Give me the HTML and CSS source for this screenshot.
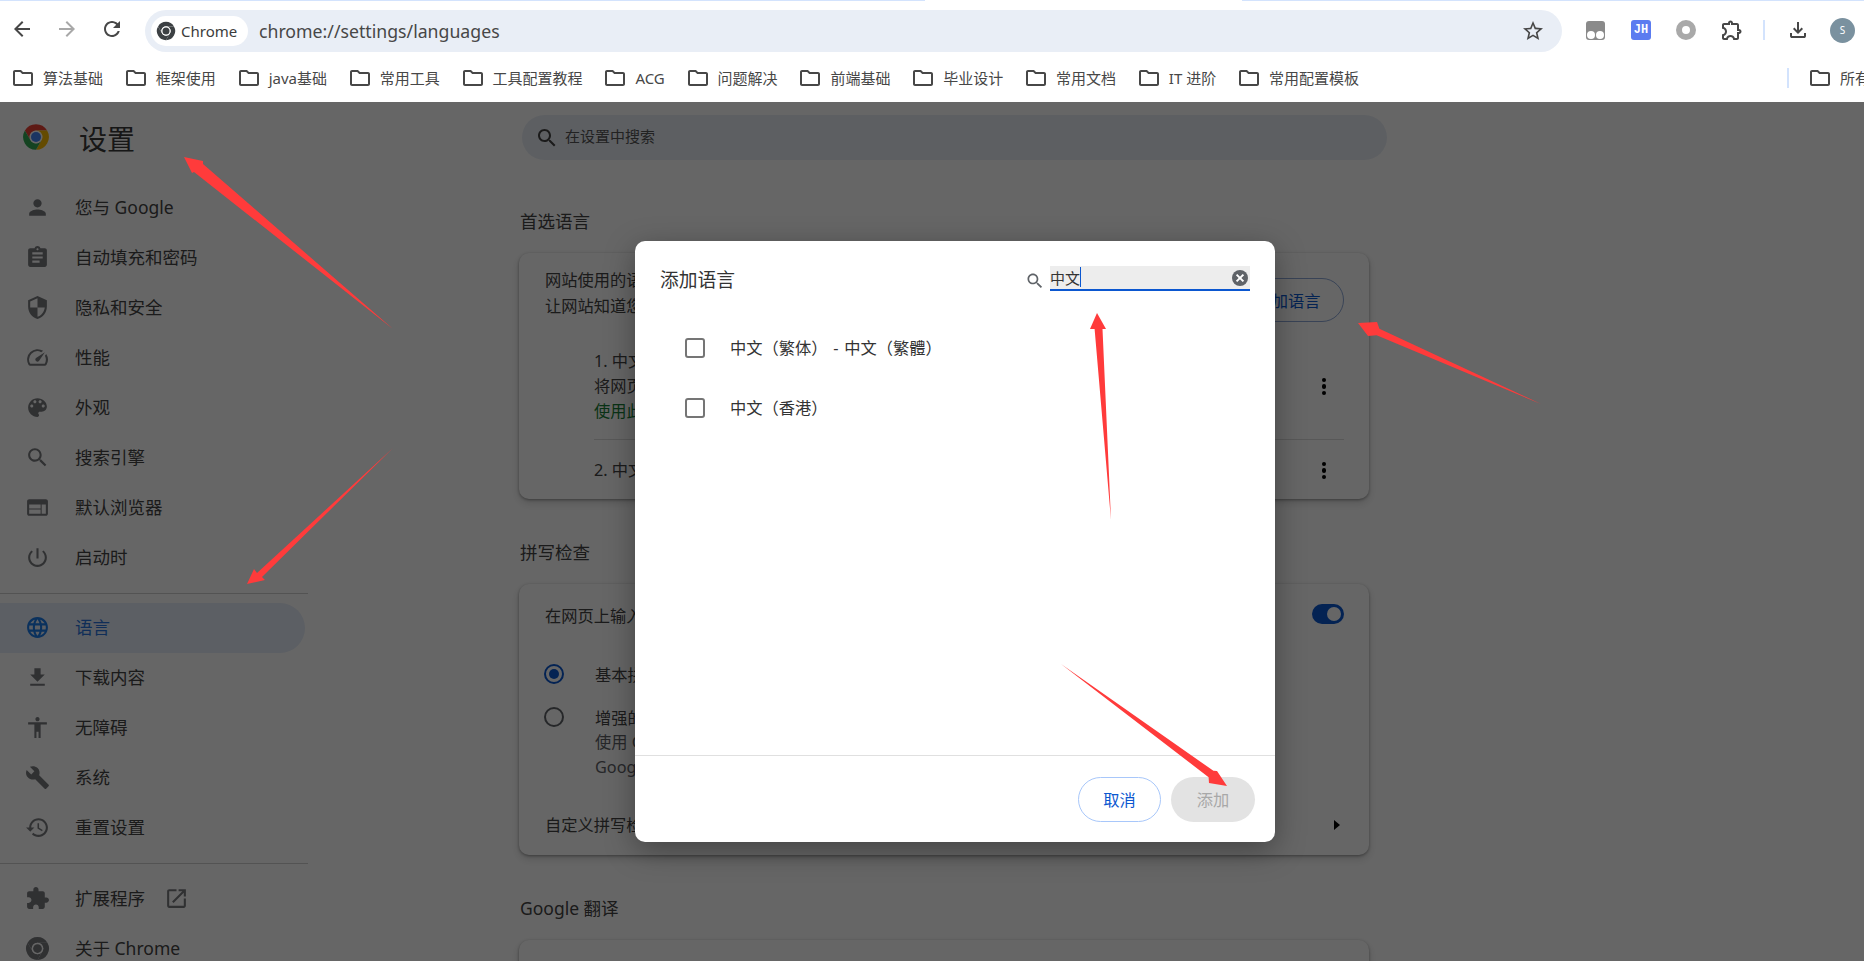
FILE: index.html
```html
<!DOCTYPE html>
<html lang="zh-CN">
<head>
<meta charset="UTF-8" />
<meta name="viewport" content="width=device-width, initial-scale=1" />
<title>设置 - 语言</title>
<link rel="stylesheet" href="styles.css">
</head>
<body>

<svg class="sprite" width="0" height="0">
  <symbol id="i-back" viewBox="0 0 24 24"><path d="M20 11H7.83l5.59-5.59L12 4l-8 8 8 8 1.41-1.41L7.83 13H20v-2z"/></symbol>
  <symbol id="i-forward" viewBox="0 0 24 24"><path d="M12 4l-1.41 1.41L16.17 11H4v2h12.17l-5.58 5.59L12 20l8-8z"/></symbol>
  <symbol id="i-refresh" viewBox="0 0 24 24"><path d="M17.65 6.35C16.2 4.9 14.21 4 12 4c-4.42 0-7.99 3.58-7.99 8s3.57 8 7.99 8c3.73 0 6.84-2.55 7.73-6h-2.08c-.82 2.33-3.04 4-5.65 4-3.31 0-6-2.69-6-6s2.69-6 6-6c1.66 0 3.14.69 4.22 1.78L13 11h7V4l-2.35 2.35z"/></symbol>
  <symbol id="i-star" viewBox="0 0 24 24"><path d="M22 9.24l-7.19-.62L12 2 9.19 8.63 2 9.24l5.46 4.73L5.82 21 12 17.27 18.18 21l-1.63-7.03L22 9.24zM12 15.4l-3.76 2.27 1-4.28-3.32-2.88 4.38-.38L12 6.1l1.71 4.04 4.38.38-3.32 2.88 1 4.28L12 15.4z"/></symbol>
  <symbol id="i-folder" viewBox="0 0 24 24"><path d="M9.17 6l2 2H20v10H4V6h5.17M10 4H4c-1.1 0-1.99.9-1.99 2L2 18c0 1.1.9 2 2 2h16c1.1 0 2-.9 2-2V8c0-1.1-.9-2-2-2h-8l-2-2z"/></symbol>
  <symbol id="i-puzzle-line" viewBox="0 0 24 24"><path d="M10.5 4.5c.28 0 .5.22.5.5v2h6v6h2c.28 0 .5.22.5.5s-.22.5-.5.5h-2v6h-2.12c-.68-1.75-2.39-3-4.38-3s-3.7 1.25-4.38 3H4v-2.12c1.75-.68 3-2.39 3-4.38 0-1.99-1.24-3.7-2.99-4.38L4 7h6V5c0-.28.22-.5.5-.5m0-2C9.12 2.5 8 3.62 8 5H4c-1.1 0-1.99.9-1.99 2v3.8h.29c1.49 0 2.7 1.21 2.7 2.7s-1.21 2.7-2.7 2.7H2V20c0 1.1.9 2 2 2h3.8v-.3c0-1.49 1.21-2.7 2.7-2.7s2.7 1.21 2.7 2.7v.3H17c1.1 0 2-.9 2-2v-4c1.38 0 2.5-1.12 2.5-2.5S20.38 11 19 11V7c0-1.1-.9-2-2-2h-4c0-1.38-1.12-2.5-2.5-2.5z"/></symbol>
  <symbol id="i-save" viewBox="0 0 24 24"><path d="M12 16l-5-5 1.4-1.45 2.6 2.6V4h2v8.15l2.6-2.6L17 11l-5 5zM6 20c-.55 0-1.02-.2-1.41-.59C4.2 19.02 4 18.55 4 18v-3h2v3h12v-3h2v3c0 .55-.2 1.02-.59 1.41-.39.39-.86.59-1.41.59H6z"/></symbol>
  <symbol id="i-person" viewBox="0 0 24 24"><path d="M12 12c2.21 0 4-1.79 4-4s-1.79-4-4-4-4 1.79-4 4 1.79 4 4 4zm0 2c-2.67 0-8 1.34-8 4v2h16v-2c0-2.66-5.33-4-8-4z"/></symbol>
  <symbol id="i-clipboard" viewBox="0 0 24 24"><path d="M19 3h-4.18C14.4 1.84 13.3 1 12 1c-1.3 0-2.4.84-2.82 2H5c-1.1 0-2 .9-2 2v14c0 1.1.9 2 2 2h14c1.1 0 2-.9 2-2V5c0-1.1-.9-2-2-2zm-7 0c.55 0 1 .45 1 1s-.45 1-1 1-1-.45-1-1 .45-1 1-1zm2 14H7v-2h7v2zm3-4H7v-2h10v2zm0-4H7V7h10v2z"/></symbol>
  <symbol id="i-shield" viewBox="0 0 24 24"><path d="M12 1L3 5v6c0 5.55 3.84 10.74 9 12 5.16-1.26 9-6.45 9-12V5l-9-4zm0 10.99h7c-.53 4.12-3.28 7.79-7 8.94V12H5V6.3l7-3.11v8.8z"/></symbol>
  <symbol id="i-speed" viewBox="0 0 24 24"><path d="M20.38 8.57l-1.23 1.85a8 8 0 0 1-.22 7.58H5.07A8 8 0 0 1 15.58 6.85l1.85-1.23A10 10 0 0 0 3.35 19a2 2 0 0 0 1.72 1h13.85a2 2 0 0 0 1.74-1 10 10 0 0 0-.27-10.44zm-9.79 6.84a2 2 0 0 0 2.83 0l5.66-8.49-8.49 5.66a2 2 0 0 0 0 2.83z"/></symbol>
  <symbol id="i-palette" viewBox="0 0 24 24"><path d="M12 3c-4.97 0-9 4.03-9 9s4.03 9 9 9c.83 0 1.5-.67 1.5-1.5 0-.39-.15-.74-.39-1.01-.23-.26-.38-.61-.38-.99 0-.83.67-1.5 1.5-1.5H16c2.76 0 5-2.24 5-5 0-4.42-4.03-8-9-8zm-5.5 9c-.83 0-1.5-.67-1.5-1.5S5.67 9 6.5 9 8 9.67 8 10.5 7.33 12 6.5 12zm3-4C8.67 8 8 7.33 8 6.5S8.67 5 9.5 5s1.5.67 1.5 1.5S10.33 8 9.5 8zm5 0c-.83 0-1.5-.67-1.5-1.5S13.67 5 14.5 5s1.5.67 1.5 1.5S15.33 8 14.5 8zm3 4c-.83 0-1.5-.67-1.5-1.5S16.67 9 17.5 9s1.5.67 1.5 1.5-.67 1.5-1.5 1.5z"/></symbol>
  <symbol id="i-search" viewBox="0 0 24 24"><path d="M15.5 14h-.79l-.28-.27C15.41 12.59 16 11.11 16 9.5 16 5.91 13.09 3 9.5 3S3 5.91 3 9.5 5.91 16 9.5 16c1.61 0 3.09-.59 4.23-1.57l.27.28v.79l5 4.99L20.49 19l-4.99-5zm-6 0C7.01 14 5 11.99 5 9.5S7.01 5 9.5 5 14 7.01 14 9.5 11.99 14 9.5 14z"/></symbol>
  <symbol id="i-web" viewBox="0 0 24 24"><path d="M20 4H4c-1.1 0-2 .9-2 2v12c0 1.1.9 2 2 2h16c1.1 0 2-.9 2-2V6c0-1.1-.9-2-2-2zm-5 14H4v-4h11v4zm0-5H4V9h11v4zm5 5h-4V9h4v9z"/></symbol>
  <symbol id="i-power" viewBox="0 0 24 24"><path d="M13 3h-2v10h2V3zm4.83 2.17l-1.42 1.42C17.99 7.86 19 9.81 19 12c0 3.87-3.13 7-7 7s-7-3.13-7-7c0-2.19 1.01-4.14 2.58-5.42L6.17 5.17C4.23 6.82 3 9.26 3 12c0 4.97 4.03 9 9 9s9-4.03 9-9c0-2.74-1.23-5.18-3.17-6.83z"/></symbol>
  <symbol id="i-language" viewBox="0 0 24 24"><path d="M11.99 2C6.47 2 2 6.48 2 12s4.47 10 9.99 10C17.52 22 22 17.52 22 12S17.52 2 11.99 2zm6.93 6h-2.95c-.32-1.25-.78-2.45-1.38-3.56 1.84.63 3.37 1.91 4.33 3.56zM12 4.04c.83 1.2 1.48 2.53 1.91 3.96h-3.82c.43-1.43 1.08-2.76 1.91-3.96zM4.26 14C4.1 13.36 4 12.69 4 12s.1-1.36.26-2h3.38c-.08.66-.14 1.32-.14 2 0 .68.06 1.34.14 2H4.26zm.82 2h2.95c.32 1.25.78 2.45 1.38 3.56-1.84-.63-3.37-1.9-4.33-3.56zm2.95-8H5.08c.96-1.66 2.49-2.93 4.33-3.56C8.81 5.55 8.35 6.75 8.03 8zM12 19.96c-.83-1.2-1.48-2.53-1.91-3.96h3.82c-.43 1.43-1.08 2.76-1.91 3.96zM14.34 14H9.66c-.09-.66-.16-1.32-.16-2 0-.68.07-1.35.16-2h4.68c.09.65.16 1.32.16 2 0 .68-.07 1.34-.16 2zm.25 5.56c.6-1.11 1.06-2.31 1.38-3.56h2.95c-.96 1.65-2.49 2.93-4.33 3.56zM16.36 14c.08-.66.14-1.32.14-2 0-.68-.06-1.34-.14-2h3.38c.16.64.26 1.31.26 2s-.1 1.36-.26 2h-3.38z"/></symbol>
  <symbol id="i-download" viewBox="0 0 24 24"><path d="M19 9h-4V3H9v6H5l7 7 7-7zM5 18v2h14v-2H5z"/></symbol>
  <symbol id="i-access" viewBox="0 0 24 24"><path d="M12 2c1.1 0 2 .9 2 2s-.9 2-2 2-2-.9-2-2 .9-2 2-2zm9 7h-6v13h-2v-6h-2v6H9V9H3V7h18v2z"/></symbol>
  <symbol id="i-build" viewBox="0 0 24 24"><path d="M22.7 19l-9.1-9.1c.9-2.3.4-5-1.5-6.9-2-2-5-2.4-7.4-1.3L9 6 6 9 1.6 4.7C.4 7.1.9 10.1 2.9 12.1c1.9 1.9 4.6 2.4 6.9 1.5l9.1 9.1c.4.4 1 .4 1.4 0l2.3-2.3c.5-.4.5-1.1.1-1.4z"/></symbol>
  <symbol id="i-restore" viewBox="0 0 24 24"><path d="M13 3c-4.97 0-9 4.03-9 9H1l3.89 3.89.07.14L9 12H6c0-3.87 3.13-7 7-7s7 3.13 7 7-3.13 7-7 7c-1.93 0-3.68-.79-4.94-2.06l-1.42 1.42C8.27 19.99 10.51 21 13 21c4.97 0 9-4.03 9-9s-4.03-9-9-9zm-1 5v5l4.28 2.54.72-1.21-3.5-2.08V8H12z"/></symbol>
  <symbol id="i-puzzle" viewBox="0 0 24 24"><path d="M20.5 11H19V7c0-1.1-.9-2-2-2h-4V3.5C13 2.12 11.88 1 10.5 1S8 2.12 8 3.5V5H4c-1.1 0-1.99.9-1.99 2v3.8H3.5c1.49 0 2.7 1.21 2.7 2.7s-1.21 2.7-2.7 2.7H2V20c0 1.1.9 2 2 2h3.8v-1.5c0-1.49 1.21-2.7 2.7-2.7 1.49 0 2.7 1.21 2.7 2.7V22H17c1.1 0 2-.9 2-2v-4h1.5c1.38 0 2.5-1.12 2.5-2.5S21.88 11 20.5 11z"/></symbol>
  <symbol id="i-open" viewBox="0 0 24 24"><path d="M19 19H5V5h7V3H5c-1.11 0-2 .9-2 2v14c0 1.1.89 2 2 2h14c1.1 0 2-.9 2-2v-7h-2v7zM14 3v2h3.59l-9.83 9.83 1.41 1.41L19 6.41V10h2V3h-7z"/></symbol>
  <symbol id="i-chrome-mono" viewBox="0 0 24 24"><path d="M2.47 6.5A11 11 0 0 1 21.53 6.5H12a5.5 5.5 0 0 0-4.76 8.25z"/><path d="M21.53 6.5A11 11 0 0 1 12 23l4.76-8.25A5.5 5.5 0 0 0 12 6.5z"/><path d="M12 23A11 11 0 0 1 2.47 6.5l4.77 8.25a5.5 5.5 0 0 0 9.52 0z"/><circle cx="12" cy="12" r="5.6" fill="#fff"/><circle cx="12" cy="12" r="4.2"/></symbol>
  <symbol id="i-chrome" viewBox="0 0 24 24"><path fill="#ea4335" d="M2.47 6.5A11 11 0 0 1 21.53 6.5H12a5.5 5.5 0 0 0-4.76 8.25z"/><path fill="#fbbc04" d="M21.53 6.5A11 11 0 0 1 12 23l4.76-8.25A5.5 5.5 0 0 0 12 6.5z"/><path fill="#34a853" d="M12 23A11 11 0 0 1 2.47 6.5l4.77 8.25a5.5 5.5 0 0 0 9.52 0z"/><circle cx="12" cy="12" r="5.4" fill="#fff"/><circle cx="12" cy="12" r="4.3" fill="#4285f4"/></symbol>
</svg>

<div class="tabstrip">
  <span class="tabstrip-left"></span>
  <span class="tabstrip-right"></span>
</div>

<header class="toolbar">
  <svg class="tb-icon"><use href="#i-back"/></svg>
  <svg class="tb-icon disabled"><use href="#i-forward"/></svg>
  <svg class="tb-icon"><use href="#i-refresh"/></svg>
  <div class="omnibox">
    <div class="chip">
      <svg class="chip-logo"><use href="#i-chrome-mono"/></svg>
      <span>Chrome</span>
    </div>
    <span class="url">chrome://settings/languages</span>
    <svg class="star"><use href="#i-star"/></svg>
  </div>
  <div class="ext-icons">
    <span class="ext ext-tamper"><i></i><i></i></span>
    <span class="ext ext-jh">JH</span>
    <span class="ext ext-ring"></span>
    <svg class="tb-icon"><use href="#i-puzzle-line"/></svg>
    <span class="tb-sep"></span>
    <svg class="tb-icon"><use href="#i-save"/></svg>
    <span class="avatar">S</span>
  </div>
</header>

<nav class="bookmarks">
  <a class="bm"><svg><use href="#i-folder"/></svg>算法基础</a>
  <a class="bm"><svg><use href="#i-folder"/></svg>框架使用</a>
  <a class="bm"><svg><use href="#i-folder"/></svg>java基础</a>
  <a class="bm"><svg><use href="#i-folder"/></svg>常用工具</a>
  <a class="bm"><svg><use href="#i-folder"/></svg>工具配置教程</a>
  <a class="bm"><svg><use href="#i-folder"/></svg>ACG</a>
  <a class="bm"><svg><use href="#i-folder"/></svg>问题解决</a>
  <a class="bm"><svg><use href="#i-folder"/></svg>前端基础</a>
  <a class="bm"><svg><use href="#i-folder"/></svg>毕业设计</a>
  <a class="bm"><svg><use href="#i-folder"/></svg>常用文档</a>
  <a class="bm"><svg><use href="#i-folder"/></svg>IT 进阶</a>
  <a class="bm"><svg><use href="#i-folder"/></svg>常用配置模板</a>
  <span class="bm-sep"></span>
  <a class="bm bm-all"><svg><use href="#i-folder"/></svg>所有</a>
</nav>

<div class="settings">
  <aside class="sidebar">
    <div class="brand">
      <svg class="brand-logo"><use href="#i-chrome"/></svg>
      <h1>设置</h1>
    </div>
    <a class="nav-item"><svg><use href="#i-person"/></svg>您与 Google</a>
    <a class="nav-item"><svg><use href="#i-clipboard"/></svg>自动填充和密码</a>
    <a class="nav-item"><svg><use href="#i-shield"/></svg>隐私和安全</a>
    <a class="nav-item"><svg><use href="#i-speed"/></svg>性能</a>
    <a class="nav-item"><svg><use href="#i-palette"/></svg>外观</a>
    <a class="nav-item"><svg><use href="#i-search"/></svg>搜索引擎</a>
    <a class="nav-item"><svg><use href="#i-web"/></svg>默认浏览器</a>
    <a class="nav-item"><svg><use href="#i-power"/></svg>启动时</a>
    <hr class="nav-sep">
    <a class="nav-item active"><svg><use href="#i-language"/></svg>语言</a>
    <a class="nav-item"><svg><use href="#i-download"/></svg>下载内容</a>
    <a class="nav-item"><svg><use href="#i-access"/></svg>无障碍</a>
    <a class="nav-item"><svg><use href="#i-build"/></svg>系统</a>
    <a class="nav-item"><svg><use href="#i-restore"/></svg>重置设置</a>
    <hr class="nav-sep">
    <a class="nav-item"><svg><use href="#i-puzzle"/></svg>扩展程序<svg class="nav-open"><use href="#i-open"/></svg></a>
    <a class="nav-item"><svg><use href="#i-chrome-mono"/></svg>关于 Chrome</a>
  </aside>

  <main class="content">
    <div class="page-search">
      <svg><use href="#i-search"/></svg>
      <span>在设置中搜索</span>
    </div>

    <h2>首选语言</h2>
    <section class="card card-lang">
      <div class="card-head">
        <p>网站使用的语<br>让网站知道您</p>
        <button class="btn-outline">添加语言</button>
      </div>
      <div class="lang-row">
        <div>
          <div>1. 中文</div>
          <div>将网页</div>
          <div class="green">使用此</div>
        </div>
        <span class="kebab"><i></i><i></i><i></i></span>
      </div>
      <div class="lang-row second">
        <div>2. 中文</div>
        <span class="kebab"><i></i><i></i><i></i></span>
      </div>
    </section>

    <h2 class="next">拼写检查</h2>
    <section class="card card-spell">
      <div class="spell-top">
        <span>在网页上输入</span>
        <span class="toggle"></span>
      </div>
      <div class="radio-row first">
        <span class="radio on"></span>
        <div>基本拼</div>
      </div>
      <div class="radio-row">
        <span class="radio"></span>
        <div>
          <div>增强的</div>
          <div class="muted">使用 G</div>
          <div class="muted">Goog</div>
        </div>
      </div>
      <div class="spell-bottom">
        <span>自定义拼写检</span>
        <span class="caret-right"></span>
      </div>
    </section>

    <h2 class="next">Google 翻译</h2>
    <section class="card card-translate"></section>
  </main>

  <div class="scrim"></div>

  <div class="dialog">
    <div class="dialog-head">
      <h3>添加语言</h3>
      <div class="lang-search">
        <svg><use href="#i-search"/></svg>
        <div class="lang-input">
          <span>中文</span><span class="text-caret"></span>
          <span class="clear">
            <svg viewBox="0 0 16 16"><path d="M4.6 4.6l6.8 6.8M11.4 4.6l-6.8 6.8"/></svg>
          </span>
        </div>
      </div>
    </div>
    <div class="dialog-body">
      <label class="check-row"><span class="checkbox"></span>中文（繁体） - 中文（繁體）</label>
      <label class="check-row"><span class="checkbox"></span>中文（香港）</label>
    </div>
    <div class="dialog-foot">
      <button class="btn-cancel">取消</button>
      <button class="btn-add">添加</button>
    </div>
  </div>
</div>

<svg class="arrows" viewBox="0 0 1864 961">
  <polygon points="393,329 194,172 192,173 184,157 203,161 203,164"/>
  <polygon points="393,448 262,577 265,580 247,584 254,569 257,573"/>
  <polygon points="1541,404 1376.6,335.2 1368,336 1358,323 1377,322 1379.4,328.8"/>
  <polygon points="1111,520 1102.5,329 1106,329 1097,313 1090,329 1094.6,329"/>
  <polygon points="1061,664 1213.4,770.8 1217,771 1227,786 1209,783 1208.6,777.2"/>
</svg>

</body>
</html>
```

FILE: styles.css
```css
* { box-sizing: border-box; }

html, body {
  margin: 0;
  height: 961px;
  overflow: hidden;
  background: #fff;
  font-family: "Noto Sans", "Noto Sans CJK SC", sans-serif;
  color: #444;
}

.sprite { position: absolute; }
svg { fill: currentColor; }

/* browser chrome */
.tabstrip {
  display: flex;
  justify-content: space-between;
  height: 1px;
}
.tabstrip-left { width: 925px; background: #d3e3fd; }
.tabstrip-right { width: 622px; background: #d3e3fd; }

.toolbar {
  display: flex;
  align-items: center;
  height: 56px;
  padding: 0 10px 0 10px;
}
.tb-icon { width: 24px; height: 24px; color: #474747; flex: none; }
.tb-icon.disabled { color: #a8a8a8; }
.toolbar > .tb-icon { margin-right: 21px; }

.omnibox {
  display: flex;
  flex: none;
  align-items: center;
  width: 1417px;
  height: 42px;
  margin-top: 3px;
  padding: 0 17px 0 6px;
  border-radius: 21px;
  background: #e9eef6;
}
.chip {
  display: flex;
  align-items: center;
  gap: 5px;
  height: 30px;
  width: 97px;
  padding-left: 5px;
  border-radius: 15px;
  background: #fff;
  font-size: 15px;
  color: #3c3c3c;
}
.chip-logo { width: 20px; height: 20px; color: #3c4043; }
.url {
  margin-left: 11px;
  font-size: 17.7px;
  color: #474747;
}
.star { width: 24px; height: 24px; margin-left: auto; color: #474747; }

.ext-icons {
  display: flex;
  align-items: center;
  flex: none;
  margin-left: 24px;
  margin-top: 2px;
}
.ext { flex: none; display: block; width: 19px; height: 19px; margin-right: 26px; }
.ext-tamper {
  position: relative;
  border-radius: 3px;
  background: #8a8a8a;
}
.ext-tamper i {
  position: absolute;
  bottom: 1px;
  width: 8px;
  height: 8px;
  border-radius: 50%;
  background: #fff;
}
.ext-tamper i:first-child { left: 1px; }
.ext-tamper i:last-child { right: 1px; }
.ext-jh {
  width: 20px;
  height: 20px;
  margin-right: 25px;
  border-radius: 3px;
  background: #5b7cf0;
  color: #fff;
  font: bold 12px/20px "Liberation Mono", monospace;
  text-align: center;
}
.ext-ring {
  width: 20px;
  height: 20px;
  margin-right: 24px;
  border: 6px solid #a9a9a9;
  border-radius: 50%;
}
.ext-icons .tb-icon:nth-of-type(1) { margin-right: 19px; }
.tb-sep { width: 2px; height: 20px; margin-right: 21px; background: #d3e3fd; }
.ext-icons .tb-icon:nth-of-type(2) { margin-right: 20px; }
.avatar {
  flex: none;
  width: 25px;
  height: 25px;
  border-radius: 50%;
  background: #7a919f;
  color: #fff;
  font-size: 10px;
  line-height: 25px;
  text-align: center;
}

.bookmarks {
  display: flex;
  align-items: center;
  height: 41px;
  margin-bottom: 4px;
  padding-left: 11px;
  font-size: 15px;
  color: #474747;
  white-space: nowrap;
}
.bm { display: flex; flex: none; align-items: center; gap: 8px; margin-right: 20.8px; }
.bm svg { width: 24px; height: 24px; color: #474747; flex: none; }
.bm-sep { flex: none; width: 2px; height: 20px; margin-left: auto; margin-right: 19px; background: #d3e3fd; }
.bm-all { width: 56px; margin-right: 0; overflow: hidden; }

/* settings page, dimmed by the scrim */
.settings {
  position: relative;
  display: flex;
  height: 859px;
  overflow: hidden;
}
.sidebar { flex: none; width: 308px; }
.brand {
  display: flex;
  align-items: center;
  gap: 29px;
  height: 70px;
  margin-bottom: 11px;
  padding-left: 22px;
}
.brand-logo { width: 28px; height: 28px; margin-top: -1px; }
.brand h1 { margin: 2px 0 0; font-size: 28px; font-weight: 400; color: #3a3a3a; }

.nav-item {
  display: flex;
  align-items: center;
  gap: 25px;
  width: 305px;
  height: 50px;
  padding: 0 0 3px 25px;
  border-radius: 0 25px 25px 0;
  font-size: 17.5px;
  color: #444;
}
.nav-item svg { width: 25px; height: 25px; margin-top: 2px; color: #787a7e; flex: none; }
.nav-item .nav-open { margin-left: -6px; color: #787a7e; }
.nav-item.active { background: #e6edf9; color: #2a74dc; }
.nav-item.active svg { color: #1a7ae8; }
.nav-sep {
  height: 1px;
  margin: 10px 0 9px;
  border: 0;
  background: #d0d0d0;
}
.nav-sep:last-of-type { margin-bottom: 10px; }

.content { flex: none; width: 870px; margin-left: 211px; }
.page-search {
  display: flex;
  align-items: center;
  gap: 6px;
  width: 865px;
  height: 45px;
  margin: 13px 0 0 3px;
  padding-left: 13px;
  border-radius: 23px;
  background: #e9eef6;
  font-size: 15px;
  color: #555;
}
.page-search svg { width: 24px; height: 24px; color: #444; }
.page-search span { margin-bottom: 4px; }

.content h2 {
  margin: 49px 0 20px 1px;
  font-size: 17.5px;
  font-weight: 400;
  line-height: 24px;
  color: #444;
}
.content h2.next { margin-top: 41px; }

.card {
  width: 850px;
  border-radius: 10px;
  background: #fff;
  box-shadow: 0 1px 3px rgba(0,0,0,.35), 0 4px 8px rgba(0,0,0,.15);
  font-size: 16.25px;
  color: #444;
}
.card-lang { height: 246px; padding: 14px 25px 16px 26px; }
.card-head { display: flex; justify-content: space-between; align-items: flex-start; }
.card-head p { margin: 0; line-height: 26px; }
.btn-outline {
  width: 112px;
  height: 44px;
  margin-top: 11px;
  border: 1px solid #8fa9d8;
  border-radius: 22px;
  background: transparent;
  font: inherit;
  color: #0b57d0;
}
.lang-row {
  display: flex;
  justify-content: space-between;
  align-items: center;
  margin: 27px 0 0 49px;
  line-height: 25px;
}
.lang-row.second {
  margin-top: 15px;
  padding-top: 18px;
  border-top: 1px solid #ddd;
}
.green { color: #188038; }
.kebab {
  display: flex;
  flex-direction: column;
  align-items: center;
  justify-content: center;
  gap: 2px;
  width: 40px;
  height: 25px;
}
.kebab i { width: 4.5px; height: 4.5px; border-radius: 50%; background: #000; }

.card-spell { height: 271px; padding: 19px 25px 16px 26px; }
.spell-top {
  display: flex;
  justify-content: space-between;
  align-items: center;
  line-height: 26px;
}
.toggle {
  position: relative;
  width: 32px;
  height: 20px;
  margin-top: -4px;
  border-radius: 10px;
  background: #0b57d0;
}
.toggle::after {
  content: "";
  position: absolute;
  top: 3px;
  right: 3px;
  width: 14px;
  height: 14px;
  border-radius: 50%;
  background: #fff;
}
.radio-row {
  display: flex;
  gap: 31px;
  margin-top: 18px;
  margin-left: -1px;
  line-height: 24.5px;
}
.radio-row.first { margin-top: 34px; }
.muted { color: #5f6368; }
.radio {
  flex: none;
  position: relative;
  width: 20px;
  height: 20px;
  margin-top: 1px;
  border: 2px solid #5f6368;
  border-radius: 50%;
}
.radio.on { border-color: #0b57d0; }
.radio.on::after {
  content: "";
  position: absolute;
  inset: 3px;
  border-radius: 50%;
  background: #0b57d0;
}
.spell-bottom {
  display: flex;
  justify-content: space-between;
  align-items: center;
  margin-top: 33px;
  line-height: 26px;
}
.caret-right {
  width: 0;
  height: 0;
  margin-right: 4px;
  border-left: 6px solid #000;
  border-top: 5px solid transparent;
  border-bottom: 5px solid transparent;
}
.card-translate { height: 200px; margin-top: 0; }

.scrim {
  position: absolute;
  inset: 0;
  background: rgba(0,0,0,.6);
}

/* add languages dialog */
.dialog {
  position: absolute;
  left: 635px;
  top: 139px;
  display: flex;
  flex-direction: column;
  width: 640px;
  height: 601px;
  border-radius: 10px;
  background: #fff;
  box-shadow: 0 8px 30px rgba(0,0,0,.35);
}
.dialog-head {
  display: flex;
  justify-content: space-between;
  align-items: center;
  flex: none;
  height: 77px;
  padding: 0 25px;
}
.dialog-head h3 {
  margin: -2px 0 0;
  font-size: 18.75px;
  font-weight: 400;
  color: #333;
}
.lang-search { display: flex; align-items: center; gap: 5px; margin-top: -3px; }
.lang-search > svg { width: 20px; height: 20px; margin-top: 5px; color: #5f6368; }
.lang-input {
  display: flex;
  align-items: center;
  position: relative;
  width: 200px;
  height: 25px;
  border-bottom: 2px solid #0b57d0;
  background: #ededed;
  font-size: 15px;
  color: #333;
}
.text-caret { width: 1px; height: 20px; background: #0b57d0; }
.clear {
  position: absolute;
  right: 2px;
  top: 4px;
  width: 16px;
  height: 16px;
  border-radius: 50%;
  background: #5f6368;
}
.clear svg { display: block; width: 16px; height: 16px; fill: none; stroke: #fff; stroke-width: 2; }

.dialog-body { flex: 1; }
.check-row {
  display: flex;
  align-items: center;
  gap: 25px;
  height: 60px;
  padding: 0 0 2px 50px;
  font-size: 16.25px;
  word-spacing: 1.5px;
  color: #333;
}
.checkbox {
  flex: none;
  width: 20px;
  height: 20px;
  margin-top: 2px;
  border: 2px solid #757575;
  border-radius: 3px;
}

.dialog-foot {
  display: flex;
  justify-content: flex-end;
  gap: 10px;
  flex: none;
  height: 87px;
  padding: 21px 20px 0 0;
  border-top: 1px solid #e0e0e0;
}
.dialog-foot button {
  height: 45px;
  padding-bottom: 3px;
  border-radius: 23px;
  font-family: inherit;
  font-size: 16.25px;
}
.btn-cancel {
  width: 83px;
  border: 1px solid #a8c7fa;
  background: #fff;
  color: #0b57d0;
}
.btn-add {
  width: 84px;
  border: 0;
  background: #e3e3e3;
  color: #a8a8a8;
}

.arrows {
  position: absolute;
  left: 0;
  top: 0;
  width: 1864px;
  height: 961px;
  pointer-events: none;
}
.arrows polygon { fill: #ff3b3b; }
```
